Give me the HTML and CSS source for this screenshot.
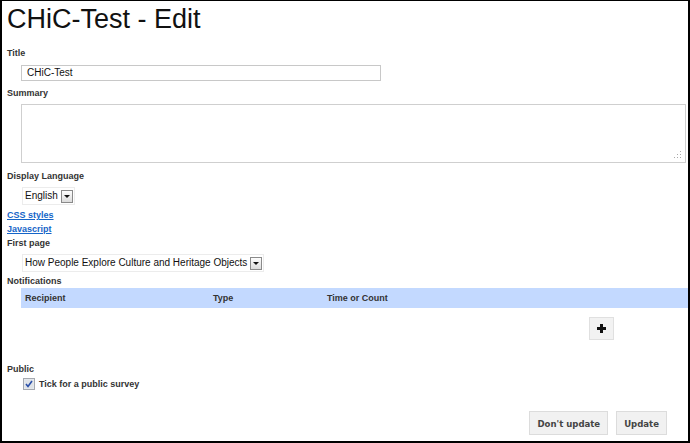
FILE: index.html
```html
<!DOCTYPE html>
<html>
<head>
<meta charset="utf-8">
<link rel="stylesheet" href="styles.css">
</head>
<body>
<div class="frame">
  <h1 class="page-title">CHiC-Test - Edit</h1>

  <div class="label l-title">Title</div>
  <div class="text-input field">CHiC-Test</div>

  <div class="label l-summary">Summary</div>
  <div class="textarea field">
    <svg class="grip" width="8" height="8" viewBox="0 0 8 8">
      <rect x="6" y="0" width="1" height="1" fill="#aaa"/>
      <rect x="3" y="3" width="1" height="1" fill="#aaa"/>
      <rect x="6" y="3" width="1" height="1" fill="#aaa"/>
      <rect x="0" y="6" width="1" height="1" fill="#aaa"/>
      <rect x="3" y="6" width="1" height="1" fill="#aaa"/>
      <rect x="6" y="6" width="1" height="1" fill="#aaa"/>
    </svg>
  </div>

  <div class="label l-lang">Display Language</div>
  <div class="select field s-lang"><span class="select-text">English</span><span class="arrow"><span class="tri"></span></span></div>

  <a class="link l-css" href="#">CSS styles</a>
  <a class="link" href="#">Javascript</a>
  <div class="label l-first">First page</div>
  <div class="select field s-first"><span class="select-text">How People Explore Culture and Heritage Objects</span><span class="arrow"><span class="tri"></span></span></div>

  <div class="label l-notif">Notifications</div>
  <div class="notif-table">
    <div class="notif-head">
      <span>Recipient</span>
      <span>Type</span>
      <span>Time or Count</span>
    </div>
    <div class="notif-foot">
      <button class="plus-btn" type="button">
        <svg width="9" height="9" viewBox="0 0 9 9"><path d="M3 0h3v3h3v3H6v3H3V6H0V3h3z" fill="#111"/></svg>
      </button>
    </div>
  </div>

  <div class="label l-public">Public</div>
  <label class="check-row">
    <svg class="checkbox" width="12" height="12" viewBox="0 0 12 12">
      <rect x="0.5" y="0.5" width="11" height="11" fill="#e9ecf0" stroke="#a5a9b0"/>
      <rect x="1.5" y="1.5" width="9" height="9" fill="#dfe3e8"/>
      <path d="M3 6 L5 8.5 L9 3" fill="none" stroke="#2a4fa8" stroke-width="1.6"/>
    </svg>
    <span>Tick for a public survey</span>
  </label>

  <div class="actions">
    <button class="btn" type="button">Don't update</button>
    <button class="btn" type="button">Update</button>
  </div>
</div>
</body>
</html>
```

FILE: styles.css
```css
html, body {
  margin: 0;
  padding: 0;
  background: #fff;
}

.frame {
  box-sizing: border-box;
  width: 690px;
  height: 443px;
  border-top: 1px solid #000;
  border-left: 2px solid #000;
  border-right: 2px solid #000;
  border-bottom: 2px solid #000;
  padding: 0 0 0 5px;
  overflow: hidden;
  font-family: "Liberation Sans", Arial, sans-serif;
  color: #222;
}

.page-title {
  margin: 3px 0 0 0;
  font-size: 27px;
  line-height: 31px;
  font-weight: normal;
  color: #111;
}

.label {
  font-size: 9px;
  font-weight: bold;
  line-height: 14px;
  color: #333;
}

.l-title { margin-top: 11px; }
.l-summary { margin-top: 5px; }
.l-lang { margin-top: 6px; }
.l-first { margin-top: 0; }
.l-notif { margin-top: 2px; }
.l-public { margin-top: 22px; }

.field {
  margin-left: 14px;
  box-sizing: border-box;
}

.text-input {
  margin-top: 5px;
  width: 360px;
  height: 16px;
  border: 1px solid #c8c8c8;
  font-size: 10px;
  line-height: 14px;
  padding-left: 5px;
  color: #111;
}

.textarea {
  margin-top: 4px;
  width: 665px;
  height: 59px;
  border: 1px solid #cfcfcf;
  display: flex;
  justify-content: flex-end;
  align-items: flex-end;
  padding: 0 3px 3px 0;
}

.select {
  display: flex;
  align-items: center;
  width: fit-content;
  border: 1px solid #ececec;
  padding: 1px 1px 1px 2px;
  font-size: 10px;
  color: #111;
  gap: 3px;
}

.s-lang { margin-top: 4px; margin-left: 15px; }
.s-first { margin-top: 4px; margin-left: 15px; }

.select-text {
  line-height: 14px;
}

.arrow {
  box-sizing: border-box;
  width: 12px;
  height: 13px;
  border: 1px solid #8a8a8a;
  background: linear-gradient(#fdfdfd, #dcdcdc);
  display: flex;
  align-items: center;
  justify-content: center;
}

.tri {
  width: 0;
  height: 0;
  border-left: 3px solid transparent;
  border-right: 3px solid transparent;
  border-top: 3px solid #111;
  margin-top: 1px;
}

.link {
  display: block;
  width: fit-content;
  font-size: 9px;
  font-weight: bold;
  line-height: 14px;
  color: #1565c8;
  text-decoration: underline;
}

.l-css { margin-top: 3px; }

.notif-table {
  margin-top: 0;
  margin-left: 14px;
}

.notif-head {
  display: grid;
  grid-template-columns: 188px 114px 1fr;
  height: 20px;
  align-items: center;
  background: #c3d9ff;
  padding-left: 4px;
  font-size: 9px;
  font-weight: bold;
  color: #333;
}

.notif-foot {
  display: flex;
  justify-content: flex-end;
  padding: 9px 74px 0 0;
}

.plus-btn {
  box-sizing: border-box;
  width: 25px;
  height: 23px;
  padding: 0;
  margin: 0;
  border: 1px solid #e0e0e0;
  background: #f2f2f2;
  display: flex;
  align-items: center;
  justify-content: center;
}

.check-row {
  display: flex;
  align-items: center;
  gap: 4px;
  margin: 1px 0 0 16px;
  font-size: 9px;
  font-weight: bold;
  color: #333;
  line-height: 14px;
}

.checkbox {
  display: block;
}

.actions {
  display: flex;
  justify-content: flex-end;
  gap: 8px;
  padding-right: 21px;
  margin-top: 20px;
}

.btn {
  box-sizing: border-box;
  height: 24px;
  padding: 0 7px;
  margin: 0;
  border: 1px solid #dcdcdc;
  background: #f1f1f1;
  font-family: "DejaVu Sans Condensed", "DejaVu Sans", sans-serif;
  font-stretch: condensed;
  font-size: 9.5px;
  font-weight: bold;
  color: #444;
  white-space: nowrap;
}
```
